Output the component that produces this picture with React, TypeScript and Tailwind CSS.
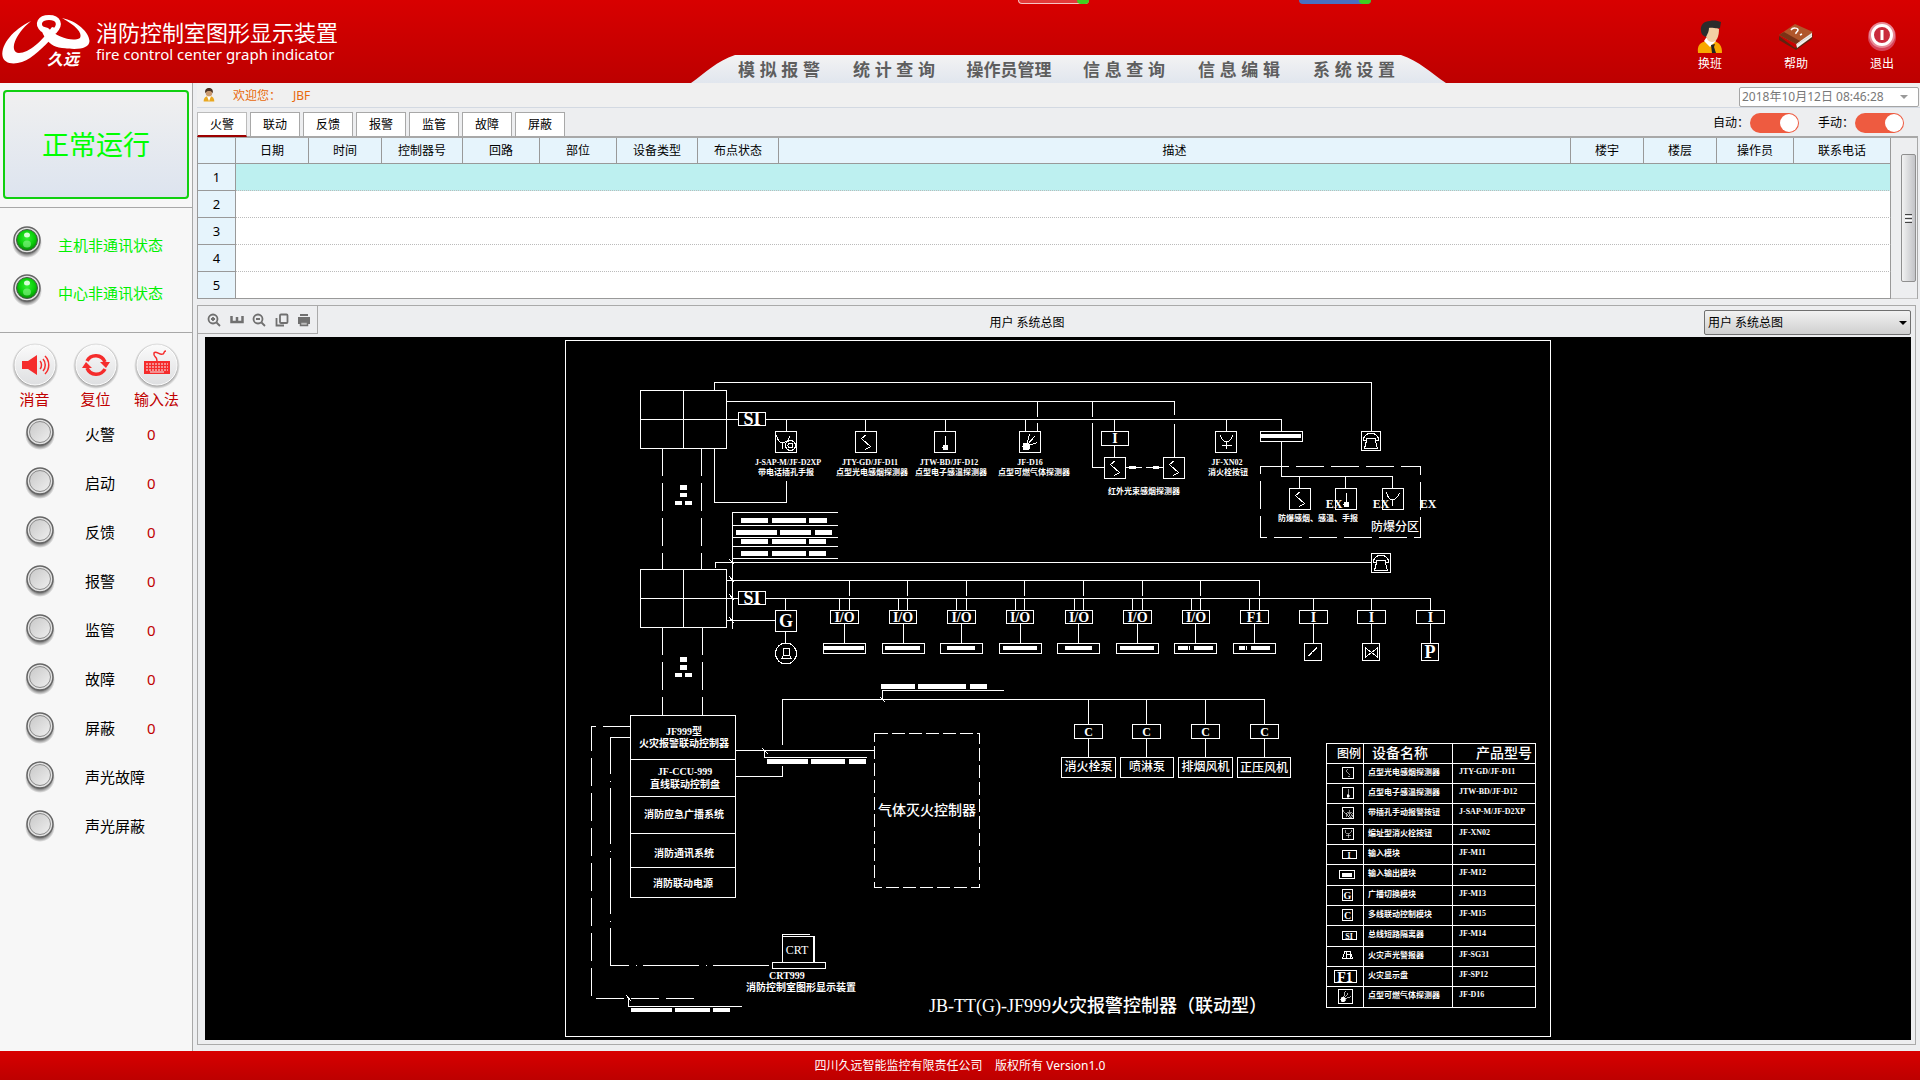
import { useState } from "react";
import type { ReactNode } from "react";

const menus = ["模 拟 报 警", "统 计 查 询", "操作员管理", "信 息 查 询", "信 息 编 辑", "系 统 设 置"];

const tabs = ["火警", "联动", "反馈", "报警", "监管", "故障", "屏蔽"];

const columns = [
  { name: "", width: "w-[38px]" },
  { name: "日期", width: "w-[73px]" },
  { name: "时间", width: "w-[73px]" },
  { name: "控制器号", width: "w-[81px]" },
  { name: "回路", width: "w-[77px]" },
  { name: "部位", width: "w-[77px]" },
  { name: "设备类型", width: "w-[81px]" },
  { name: "布点状态", width: "w-[81px]" },
  { name: "描述", width: "" },
  { name: "楼宇", width: "w-[73px]" },
  { name: "楼层", width: "w-[73px]" },
  { name: "操作员", width: "w-[77px]" },
  { name: "联系电话", width: "w-[97px]" },
];

const lamps = [
  { name: "火警", count: 0 },
  { name: "启动", count: 0 },
  { name: "反馈", count: 0 },
  { name: "报警", count: 0 },
  { name: "监管", count: 0 },
  { name: "故障", count: 0 },
  { name: "屏蔽", count: 0 },
  { name: "声光故障" },
  { name: "声光屏蔽" },
];

const legend = [
  { top: 763, icon: "smoke", name: "点型光电感烟探测器", model: "JTY-GD/JF-D11" },
  { top: 783, icon: "heat", name: "点型电子感温探测器", model: "JTW-BD/JF-D12" },
  { top: 803, icon: "manual", name: "带插孔手动报警按钮", model: "J-SAP-M/JF-D2XP" },
  { top: 824, icon: "hydrant", name: "编址型消火栓按钮", model: "JF-XN02" },
  { top: 844, icon: "I", name: "输入模块", model: "JF-M11" },
  { top: 864, icon: "io", name: "输入输出模块", model: "JF-M12" },
  { top: 885, icon: "G", name: "广播切换模块", model: "JF-M13" },
  { top: 905, icon: "C", name: "多线联动控制模块", model: "JF-M15" },
  { top: 925, icon: "SI", name: "总线短路隔离器", model: "JF-M14" },
  { top: 946, icon: "alarm", name: "火灾声光警报器", model: "JF-SG31" },
  { top: 966, icon: "F1", name: "火灾显示盘", model: "JF-SP12" },
  { top: 986, icon: "gas", name: "点型可燃气体探测器", model: "JF-D16" },
];

// x da caixa, x do ramal superior, x do ramal inferior, centro e barras da etiqueta
const modules = [
  { x: 830.5, w: 28, left: 839.5, right: 849.5, mid: 844.5, bars: [[824, 40]] },
  { x: 889.5, w: 27, left: 898.5, right: 907.5, mid: 903.5, bars: [[885, 35]] },
  { x: 947.5, w: 28, left: 956.5, right: 966.5, mid: 961.5, bars: [[947, 28]] },
  { x: 1006.5, w: 27, left: 1015.5, right: 1024.5, mid: 1020.5, bars: [[1003, 34]] },
  { x: 1065.5, w: 27, left: 1074.5, right: 1083.5, mid: 1078.5, bars: [[1065, 27]] },
  { x: 1123.5, w: 28, left: 1132.5, right: 1142.5, mid: 1137.5, bars: [[1120, 34]] },
  { x: 1182.5, w: 27, left: 1191.5, right: 1200.5, mid: 1195.5, bars: [[1178, 10], [1189, 1], [1194, 19]] },
  { x: 1240.5, w: 28, left: 1249.5, right: 1259.5, mid: 1254.5, bars: [[1239, 6], [1246, 1], [1251, 19]] },
];

const pumps = [
  { x: 1061.5, w: 54, c: 1088.5, name: "消火栓泵", y: 771 },
  { x: 1120.5, w: 53, c: 1146.5, name: "喷淋泵", y: 771 },
  { x: 1178.5, w: 54, c: 1205.5, name: "排烟风机", y: 771 },
  { x: 1237.5, w: 53, c: 1264.5, name: "正压风机", y: 772 },
];

function Logo() {
  return (
    <svg width="92" height="64" viewBox="0 12 92 64" fill="#fff" aria-hidden="true">
      <path d="M31 21C13 30 1 44 2.500 56C4 66 20 65 30 58C41 50 51 40 59 29L52 27C42 41 29 53 19 53C9 52 14 35 31 21Z" />
      <path d="M43 30C36 24 40 17.500 49 17.500S62 24 54 32" fill="none" stroke="#fff" strokeWidth="5" />
      <path d="M38 25C43 31 45 46 62 48C78 50 89 49 89.500 41C89 32 77 21 62 18C75 25 83 33 80 38C73 42 58 38 48 28Z" />
      <text x="47" y="65" className="text-[16px] font-bold italic">
        久远
      </text>
    </svg>
  );
}

function UserIcon() {
  return (
    <svg width="26" height="34" viewBox="0 0 26 34" aria-hidden="true">
      <path d="M1 33C0 25 3 23 9 21H17C23 23 25 26 25 33Z" fill="#f8a800" />
      <path d="M7 21L13 27L19 21L17 18H9Z" fill="#fff" />
      <path d="M14 25L18 24L17 27L19 33H15Z" fill="#222" />
      <path d="M8 10C8 16 10 22 15 22C20 22 22 16 22 9L14 5Z" fill="#f3cfa4" />
      <path d="M4 11C3 5 7 1 13 1C17 0 21 1 24 2L23 8C20 9 14 7 12 8C12 11 11 13 9 17C6 16 4 14 4 11Z" fill="#2c2c2c" />
    </svg>
  );
}

function BookIcon() {
  return (
    <svg width="36" height="28" viewBox="0 0 36 28" aria-hidden="true">
      <path d="M1 13L17 25L35 11L34 16L18 27L1 17Z" fill="#5d2410" />
      <path d="M18 20L34 9L34 14L19 25Z" fill="#f4f0ec" />
      <path d="M18 20L34 10M18 22L34 12" stroke="#bbb" strokeWidth="0.500" />
      <path d="M1 12L17 1L35 9L18 21Z" fill="#b0562b" />
      <path d="M1 12L6 9L22 18L18 21Z" fill="#7a3216" />
      <path d="M13 7C15 4 20 5 20 7C20 9 17 9 18 11M22 12L24 11" stroke="#fff" strokeWidth="1.500" fill="none" />
    </svg>
  );
}

function PowerIcon() {
  return (
    <svg width="30" height="32" viewBox="0 0 30 32" aria-hidden="true">
      <circle cx="15" cy="16" r="14" fill="#d8455a" />
      <circle cx="15" cy="14" r="13" fill="#e88a96" />
      <circle cx="15" cy="14" r="9.500" fill="#c92a3c" stroke="#fff" strokeWidth="3" />
      <path d="M15 9V19" stroke="#fff" strokeWidth="3" />
    </svg>
  );
}

function Lamp({ on = false }: { on?: boolean }) {
  return (
    <svg width="30" height="34" viewBox="0 0 30 34" className="shrink-0" aria-hidden="true">
      <defs>
        <radialGradient id="lampOn" cx="50%" cy="40%" r="60%">
          <stop offset="0" stopColor="#35f035" />
          <stop offset="0.600" stopColor="#0bcf0b" />
          <stop offset="1" stopColor="#068806" />
        </radialGradient>
        <linearGradient id="lampOff" x1="0" y1="0" x2="1" y2="1">
          <stop offset="0" stopColor="#c8c8c8" />
          <stop offset="1" stopColor="#efefef" />
        </linearGradient>
        <radialGradient id="lampShadow">
          <stop offset="0.700" stopColor="#000" stopOpacity="0.550" />
          <stop offset="1" stopColor="#000" stopOpacity="0" />
        </radialGradient>
      </defs>
      <ellipse cx="15" cy="18" rx="15" ry="15" fill="url(#lampShadow)" />
      <circle cx="15" cy="15" r="13" fill="#e4e4e4" stroke="#666" strokeWidth="1.500" />
      <circle cx="15" cy="15" r="10.500" fill={on ? "url(#lampOn)" : "url(#lampOff)"} stroke={on ? "#4a5a4a" : "#8a8a8a"} />
      {on && <ellipse cx="15" cy="10" rx="3" ry="2.500" fill="#d6ffd6" />}
      {on && <ellipse cx="15" cy="19" rx="4" ry="3.500" fill="#8df58d" opacity="0.600" />}
    </svg>
  );
}

function RoundIcon({ children }: { children: ReactNode }) {
  return (
    <svg width="48" height="48" viewBox="0 0 48 48" aria-hidden="true">
      <defs>
        <linearGradient id="knob" x1="0" y1="0" x2="0" y2="1">
          <stop offset="0" stopColor="#fafafa" />
          <stop offset="1" stopColor="#dedfe1" />
        </linearGradient>
        <radialGradient id="knobShadow">
          <stop offset="0.800" stopColor="#000" stopOpacity="0.450" />
          <stop offset="1" stopColor="#000" stopOpacity="0" />
        </radialGradient>
      </defs>
      <circle cx="24" cy="25" r="23" fill="url(#knobShadow)" />
      <circle cx="24" cy="24" r="20" fill="url(#knob)" stroke="#fff" />
      {children}
    </svg>
  );
}

function ToolIcon({ children }: { children: ReactNode }) {
  return (
    <svg width="14" height="14" viewBox="0 0 14 14" fill="none" stroke="#707070" strokeWidth="1.800" aria-hidden="true">
      {children}
    </svg>
  );
}

// símbolos desenhados dentro de uma caixa de 21px
function Symbol({ kind }: { kind: string }) {
  if (kind === "smoke") return <path d="M11 3L6 7L15 15L10 18" />;
  if (kind === "heat")
    return (
      <>
        <path d="M11 4V14" />
        <circle cx="11" cy="16" r="2.500" fill="#fff" />
      </>
    );
  if (kind === "gas")
    return (
      <>
        <circle cx="7" cy="15" r="3.500" fill="#fff" />
        <path d="M7 14L10 3M8 13L15 5M9 14L18 11" />
      </>
    );
  if (kind === "manual")
    return (
      <>
        <path d="M1 4C2 9 4 11 7 11S13 9 14 5M7 11V17" />
        <circle cx="15" cy="14" r="5" />
        <circle cx="15" cy="14" r="2.500" />
      </>
    );
  if (kind === "hydrant") return <path d="M5 4C6 8 8 10 11 10S16 8 17 4M11 10V17M6 14H16" />;
  return <path d="M4 4C5 9 7 11 10 11S15 9 17 5M10 11V17" />;
}

function Device({ x, y, kind, size = 21 }: { x: number; y: number; kind: string; size?: number }) {
  return (
    <svg x={x - 0.5} y={y - 0.5} width={size + 1} height={size + 1} viewBox="-0.5 -0.5 22 22">
      <rect width="21" height="21" strokeWidth={21 / size} />
      <Symbol kind={kind} />
    </svg>
  );
}

function Phone({ x, y }: { x: number; y: number }) {
  return (
    <g transform={`translate(${x} ${y})`}>
      <rect width="19" height="19" />
      <path d="M2 9C2 4 5 2 9.500 2S17 4 17 9H14V7H5V9ZM5 9L3 17H16L14 9" />
    </g>
  );
}

function Label({ x, y, children, size = "text-[8px]" }: { x: number; y: number; children: ReactNode; size?: string }) {
  return (
    <text x={x} y={y} textAnchor="middle" fill="#fff" stroke="none" className={size}>
      {children}
    </text>
  );
}

function Bars({ y, h, items }: { y: number; h: number; items: number[][] }) {
  return (
    <g fill="#fff" stroke="none">
      {items.map(([x, w]) => (
        <rect key={x} x={x} y={y} width={w} height={h} />
      ))}
    </g>
  );
}

function LegendIcon({ top, icon }: { top: number; icon: string }) {
  const y = top + 4.5;
  if (icon === "I" || icon === "SI" || icon === "F1") {
    const wide = icon === "F1";
    return (
      <>
        <rect x={wide ? 1334.5 : 1342.5} y={wide ? y : y + 2} width={wide ? 22 : 14} height={wide ? 12 : 8} />
        <Label x={wide ? 1345 : 1349} y={wide ? y + 11 : y + 9} size={wide ? "text-[14px]" : "text-[8px]"}>
          {icon}
        </Label>
      </>
    );
  }
  if (icon === "io")
    return (
      <>
        <rect x="1339.500" y={y + 2} width="15" height="8" />
        <Bars y={y + 4} h={4} items={[[1342, 10]]} />
      </>
    );
  if (icon === "G" || icon === "C")
    return (
      <>
        <rect x="1342.500" y={y} width="10" height="11" />
        <Label x={1347.5} y={y + 9} size="text-[10px]">
          {icon}
        </Label>
      </>
    );
  if (icon === "alarm")
    return <path d={`M1342.500 ${y + 8}L1345 ${y + 1}H1350L1352.500 ${y + 8}ZM1346 ${y + 1}V${y + 8}M1346 ${y + 4}H1350V${y + 8}`} />;
  return <Device x={icon === "gas" ? 1338.5 : 1342.5} y={icon === "gas" ? y - 1 : y} kind={icon} size={icon === "gas" ? 14 : 11} />;
}

function Diagram() {
  return (
    <svg
      width="987"
      height="698"
      viewBox="565 340 987 698"
      fill="none"
      stroke="#fff"
      shapeRendering="crispEdges"
      className="shrink-0 font-['Liberation_Serif','Noto_Sans_CJK_SC',serif] font-bold"
      role="img"
      aria-label="系统总图"
    >
      <rect x="565.500" y="340.500" width="985" height="696" />

      {/* 楼层一 */}
      <rect x="640.500" y="390.500" width="86" height="58" />
      <path d="M683.500 390V448M640 419.500H738M765 419.500H1281.500V431" />
      <path d="M714.500 390V382.500H1371.500V431M726 401.500H1174.500V415M1174.500 424V457" />
      <path d="M714.500 448V502.500H786.500V481" />
      <rect x="738.500" y="412.500" width="27" height="13" />
      <Label x={752} y={425} size="text-[18px]">SI</Label>
      <path d="M786.500 419V431M865.500 419V431M945.500 419V431M1025.500 419V431M1037.500 401V417M1037.500 423V431M1114.500 419V431M1226.500 419V431" />
      <Device x={775.5} y={431.5} kind="manual" />
      <Device x={855.5} y={431.5} kind="smoke" />
      <Device x={934.5} y={431.5} kind="heat" />
      <Device x={1019.5} y={431.5} kind="gas" />
      <Device x={1215.5} y={431.5} kind="hydrant" />
      <Label x={788} y={465}>J-SAP-M/JF-D2XP</Label>
      <Label x={786} y={475}>带电话插孔手报</Label>
      <Label x={870} y={465}>JTY-GD/JF-D11</Label>
      <Label x={872} y={475}>点型光电感烟探测器</Label>
      <Label x={949} y={465}>JTW-BD/JF-D12</Label>
      <Label x={951} y={475}>点型电子感温探测器</Label>
      <Label x={1030} y={465}>JF-D16</Label>
      <Label x={1034} y={475}>点型可燃气体探测器</Label>
      <Label x={1227} y={465}>JF-XN02</Label>
      <Label x={1228} y={475}>消火栓按钮</Label>
      <Label x={1144} y={494}>红外光束感烟探测器</Label>

      <path d="M1092.500 401V417M1092.500 423V467.500H1104M1114.500 445V457M1125 467.500H1142M1146 467.500H1163" />
      <Bars y={466} h={3} items={[[1129, 7], [1153, 6]]} />
      <rect x="1101.500" y="431.500" width="27" height="14" />
      <Label x={1115} y={443} size="text-[14px]">I</Label>
      <Device x={1104.5} y={457.5} kind="smoke" />
      <Device x={1163.5} y={457.5} kind="smoke" />

      <rect x="1260.500" y="431.500" width="42" height="10" />
      <Bars y={434} h={4} items={[[1261, 40]]} />
      <path d="M1281.500 441V476.500H1392.500V488M1299.500 476V488M1345.500 476V488" />
      <rect x="1260.500" y="466.500" width="160" height="71" strokeDasharray="28 7" />
      <Device x={1289.5} y={488.5} kind="smoke" />
      <Device x={1335.5} y={488.5} kind="heat" />
      <Device x={1382.5} y={488.5} kind="button" />
      <Label x={1334} y={508} size="text-[12px]">EX</Label>
      <Label x={1381} y={508} size="text-[12px]">EX</Label>
      <Label x={1428} y={508} size="text-[12px]">EX</Label>
      <Label x={1318} y={521}>防爆感烟、感温、手报</Label>
      <Label x={1395} y={531} size="text-[12px] font-medium">防爆分区</Label>
      <Phone x={1361.5} y={431.5} />

      <path d="M662.500 448V569M701.500 448V569M662.500 627V715M702.500 627V715" strokeDasharray="28 7" />
      <Bars y={485} h={5} items={[[680, 7]]} />
      <Bars y={493} h={4} items={[[680, 7]]} />
      <Bars y={501} h={4} items={[[675, 7], [685, 7]]} />
      <Bars y={657} h={5} items={[[680, 7]]} />
      <Bars y={665} h={5} items={[[680, 7]]} />
      <Bars y={673} h={4} items={[[675, 7], [685, 7]]} />

      <path d="M838 512.500H732.500V629M732 525.500H838M732 537.500H838M732 546.500H838M732 558.500H838" />
      <Bars y={518} h={5} items={[[741, 27], [772, 34], [809, 18]]} />
      <Bars y={530} h={5} items={[[736, 41], [780, 31], [815, 17]]} />
      <Bars y={539} h={5} items={[[741, 27], [772, 34], [809, 17]]} />
      <Bars y={551} h={5} items={[[741, 27], [772, 34], [809, 17]]} />

      {/* 楼层二 */}
      <rect x="640.500" y="569.500" width="86" height="58" />
      <path d="M683.500 569V627M640 598.500H738M765 598.500H1430.500V610M726 580.500H1260M726 620.500H775" />
      <path d="M715.500 568V562.500H1371" />
      <path d="M729 559L734 564M729 576L734 582M729 594L734 600M729 617L734 623" />
      <rect x="738.500" y="591.500" width="27" height="13" />
      <Label x={752} y={604} size="text-[18px]">SI</Label>
      <Phone x={1371.5} y={553.5} />
      <path d="M785.500 598V610M785.500 631V643" />
      <rect x="775.500" y="610.500" width="21" height="21" />
      <Label x={786} y={627} size="text-[18px]">G</Label>
      <circle cx="786" cy="653.500" r="10.500" />
      <path d="M783.500 648.500H789.500V655.500H783.500ZM783.500 655.500L781.500 658.500H791.500L789.500 655.500" />
      {modules.map((m, i) => (
        <g key={m.x}>
          <path d={`M${m.right} 580V596M${m.right} 599V610M${m.left} 598V610M${m.mid} 623V643`} />
          <rect x={m.x} y="610.500" width={m.w} height="13" />
          <Label x={m.x + m.w / 2} y={622} size="text-[14px]">
            {i === 7 ? "F1" : "I/O"}
          </Label>
          <rect x={m.mid - 21} y="643.500" width="42" height="10" />
          <Bars y={646} h={4} items={m.bars} />
        </g>
      ))}
      {[1313.5, 1371.5, 1430.5].map((x) => (
        <g key={x}>
          <path d={`M${x} 598V610M${x} 623V643`} />
          <rect x={x - 14} y="610.500" width="28" height="13" />
          <Label x={x} y={622} size="text-[14px]">I</Label>
          <rect x={x - 9} y="643.500" width="17" height="17" />
        </g>
      ))}
      <path d="M1308.500 656L1317 647M1313 652L1317 648" />
      <path d="M1365.500 648V657L1377.500 648V657Z" />
      <Label x={1430} y={658} size="text-[18px]">P</Label>

      {/* 控制器 */}
      <rect x="630.500" y="715.500" width="105" height="182" />
      <path d="M630 759.500H735M630 796.500H735M630 833.500H735M630 867.500H735" />
      <Label x={684} y={735} size="text-[10px]">JF999型</Label>
      <Label x={684} y={747} size="text-[10px]">火灾报警联动控制器</Label>
      <Label x={685} y={775} size="text-[10px]">JF-CCU-999</Label>
      <Label x={685} y={788} size="text-[10px]">直线联动控制盘</Label>
      <Label x={684} y={818} size="text-[10px]">消防应急广播系统</Label>
      <Label x={684} y={857} size="text-[10px]">消防通讯系统</Label>
      <Label x={683} y={887} size="text-[10px]">消防联动电源</Label>
      <path d="M630.500 726.500H591.500V998.500H699" strokeDasharray="28 7" />
      <path d="M630.500 737.500H610.500V965.500H772" strokeDasharray="56 7 1 6" />
      <path d="M626 995L631 1001M628.500 998V1006.500H742" />
      <Bars y={1008} h={4} items={[[631, 41], [675, 35], [713, 17]]} />

      <path d="M814.500 962V936.500H782.500V962M782.500 936V934.500H810M813.500 936V962" />
      <rect x="772.500" y="962.500" width="53" height="6" />
      <Label x={797} y={954} size="text-[12px] font-medium">CRT</Label>
      <Label x={787} y={979} size="text-[10px]">CRT999</Label>
      <Label x={801} y={991} size="text-[10px]">消防控制室图形显示装置</Label>

      <path d="M735 750.500H874M764.500 750V757.500H867M762 748L768 754" />
      <Bars y={759} h={5} items={[[767, 41], [811, 34], [849, 17]]} />
      <path d="M735 776.500H782.500V766M782.500 745V699.500H1264.500M882.500 699V690.500H1004M880 697L885 702" />
      <Bars y={684} h={5} items={[[881, 34], [918, 48], [970, 17]]} />
      <rect x="874.500" y="733.500" width="105" height="154" strokeDasharray="13 4" />
      <Label x={927} y={815} size="text-[14px] font-medium">气体灭火控制器</Label>

      {pumps.map((p) => (
        <g key={p.name}>
          <path d={`M${p.c} 699V724M${p.c} 738V757`} />
          <rect x={p.c - 14} y="724.500" width="28" height="14" />
          <Label x={p.c} y={736} size="text-[12px]">C</Label>
          <rect x={p.x} y="757.500" width={p.w} height="20" />
          <Label x={p.x + p.w / 2} y={p.y} size="text-[12px] font-medium">{p.name}</Label>
        </g>
      ))}

      <Label x={1098} y={1012} size="text-[18px] font-medium">JB-TT(G)-JF999火灾报警控制器（联动型）</Label>

      {/* 图例 */}
      <rect x="1326.500" y="743.500" width="209" height="264" />
      <path d="M1363.500 743V1007M1452.500 743V1007" />
      <Label x={1349} y={758} size="text-[12px] font-medium">图例</Label>
      <Label x={1400} y={758} size="text-[14px] font-medium">设备名称</Label>
      <Label x={1504} y={758} size="text-[14px] font-medium">产品型号</Label>
      {legend.map((item) => (
        <g key={item.name}>
          <path d={`M1326 ${item.top + 0.5}H1535`} />
          <LegendIcon top={item.top} icon={item.icon} />
          <text x="1368" y={item.top + 12} fill="#fff" stroke="none" className="text-[8px]">
            {item.name}
          </text>
          <text x="1459" y={item.top + 11} fill="#fff" stroke="none" className="text-[8px]">
            {item.model}
          </text>
        </g>
      ))}
    </svg>
  );
}

function Switch({ label, checked, onChange }: { label: string; checked: boolean; onChange: () => void }) {
  return (
    <label className="flex items-center gap-px">
      {label}
      <input
        type="checkbox"
        checked={checked}
        onChange={onChange}
        className="h-5 w-[49px] appearance-none rounded-full bg-gray-400 p-px before:block before:size-[18px] before:rounded-full before:bg-white checked:bg-[#ee5b40] checked:before:ml-auto"
      />
    </label>
  );
}

export default function App() {
  const [tab, setTab] = useState("火警");
  const [auto, setAuto] = useState(true);
  const [manual, setManual] = useState(true);
  const [row, setRow] = useState(1);

  return (
    <div className="flex min-h-screen flex-col bg-[#edeef0] font-['Noto_Sans','Noto_Sans_CJK_SC',sans-serif] text-[12px] text-black">
      <header className="relative flex h-[83px] bg-linear-to-b from-[#d80000] to-[#bd0000] text-white">
        <div className="flex flex-1 items-start gap-1 pt-3">
          <Logo />
          <div className="pt-[6px]">
            <h1 className="text-[22px] leading-7 whitespace-nowrap">消防控制室图形显示装置</h1>
            <p className="text-[15px] leading-4 whitespace-nowrap">fire control center graph indicator</p>
          </div>
        </div>

        {/* abas ocultas no topo da janela */}
        <div className="absolute top-0 left-[1018px] flex h-1 w-[71px] justify-end rounded-b-sm border-b border-l border-white/70 bg-[#e23a3a]">
          <span className="h-1 w-3 rounded-b-full bg-[#3fd020]" />
        </div>
        <div className="absolute top-0 left-[1299px] flex h-1 w-[72px] justify-end rounded-b-sm bg-[#4a6fc0]">
          <span className="h-1 w-3 rounded-b-full bg-[#3fd020]" />
        </div>

        <nav className="relative h-7 w-[755px] self-end">
          <svg className="absolute inset-0" width="755" height="28" viewBox="0 0 755 28" preserveAspectRatio="none" aria-hidden="true">
            <defs>
              <linearGradient id="menuBg" x1="0" y1="0" x2="0" y2="1">
                <stop offset="0" stopColor="#f3f3f3" />
                <stop offset="1" stopColor="#e1e6ee" />
              </linearGradient>
            </defs>
            <path d="M0 28C14 18 26 6 44 0H710C728 6 740 18 755 28Z" fill="url(#menuBg)" />
          </svg>
          <ul className="relative flex h-full items-center justify-center pt-[3px] pr-1">
            {menus.map((menu) => (
              <li key={menu} className="w-[115px] text-center">
                <button
                  type="button"
                  className="font-['Liberation_Sans','Noto_Sans_CJK_SC',sans-serif] text-[17px] leading-6 font-bold whitespace-nowrap text-[#5e5e5e]"
                >
                  {menu}
                </button>
              </li>
            ))}
          </ul>
        </nav>

        <div className="flex w-[474px] justify-end gap-[38px] pt-5 pr-[14px] leading-4">
          <button type="button" className="flex w-12 flex-col items-center gap-[2px]">
            <span className="flex h-[34px] items-center"><UserIcon /></span>
            换班
          </button>
          <button type="button" className="flex w-12 flex-col items-center gap-[2px]">
            <span className="flex h-[34px] items-center"><BookIcon /></span>
            帮助
          </button>
          <button type="button" className="flex w-12 flex-col items-center gap-[2px]">
            <span className="flex h-[34px] items-center"><PowerIcon /></span>
            退出
          </button>
        </div>
      </header>

      <div className="flex flex-1">
        <aside className="w-[193px] border-r border-[#a8a8a8] bg-[#f7f7f7]">
          <div className="mx-[3px] mt-[7px] mb-2 flex h-[109px] items-center justify-center rounded border-2 border-[#10d010] bg-linear-to-b from-[#f0f0f0] to-[#dde4ef] pt-[2px] text-[27px] text-[#00ff00]">
            正常运行
          </div>
          <div className="h-[126px] border-y border-[#a8a8a8] pt-[10px] text-[15px] text-[#00f000]">
            {["主机非通讯状态", "中心非通讯状态"].map((text) => (
              <div key={text} className="flex h-12 items-center gap-4 pl-3">
                <Lamp on />
                <span className="pt-[6px]">{text}</span>
              </div>
            ))}
          </div>
          <div className="flex px-1 pt-2 text-[15px] leading-5 text-[#c00000]">
            <button type="button" className="flex w-[61px] flex-col items-center">
              <RoundIcon>
                <path d="M11 20H17L26 14V34L17 28H11Z" fill="#f52c2c" />
                <path d="M29 20C31 22 31 26 29 28M32 18C35 21 35 27 32 30M34 15C39 20 39 28 34 33" fill="none" stroke="#f52c2c" strokeWidth="1.500" />
              </RoundIcon>
              消音
            </button>
            <button type="button" className="flex w-[61px] flex-col items-center">
              <RoundIcon>
                <path d="M15 20A10 10 0 0 1 33 21M33 28A10 10 0 0 1 15 27" fill="none" stroke="#f52c2c" strokeWidth="3.500" />
                <path d="M28 21H38L34 27ZM10 27L14 21L20 27Z" fill="#f52c2c" />
              </RoundIcon>
              复位
            </button>
            <button type="button" className="flex w-[61px] flex-col items-center">
              <RoundIcon>
                <path d="M11 20H37V33H11Z" fill="#f52c2c" />
                <path d="M13 23H35M13 26H35M13 29H35" stroke="#f3f3f3" strokeDasharray="2 1" />
                <path d="M17 31H31" stroke="#f3f3f3" />
                <path d="M24 20C24 14 20 17 21 12C23 9 27 15 30 13C32 12 30 10 33 10" fill="none" stroke="#f52c2c" strokeWidth="1.500" />
              </RoundIcon>
              输入法
            </button>
          </div>
          <ul className="text-[15px]">
            {lamps.map((lamp) => (
              <li key={lamp.name} className="flex h-[49px] items-center pl-[25px]">
                <Lamp />
                <span className="ml-[30px] w-[62px] pt-[2px] whitespace-nowrap">{lamp.name}</span>
                <span className="pt-[2px] text-[#c00000]">{lamp.count}</span>
              </li>
            ))}
          </ul>
        </aside>

        <main className="flex min-w-0 flex-1 flex-col pl-1">
          <div className="flex h-[25px] items-center border-b border-[#d3d9e2] bg-[#f0f0f0] pl-[6px] text-[#e8690b]">
            <svg width="12" height="14" viewBox="0 0 26 34" className="mr-[18px]" aria-hidden="true">
              <path d="M0 33C0 24 4 21 9 20H17C22 21 26 25 26 33Z" fill="#e9a820" />
              <path d="M8 20L13 32L18 20Z" fill="#fff" />
              <circle cx="13" cy="12" r="8" fill="#c99a70" />
              <path d="M4 13C2 4 7 0 13 0S24 4 22 13C20 8 17 7 13 7S6 8 4 13Z" fill="#4a3020" />
            </svg>
            <span className="w-[60px] pt-[2px]">欢迎您：</span>
            <span className="flex-1 pt-[2px]">JBF</span>
            <div className="mr-px flex h-5 w-[180px] items-center self-end rounded-xs border border-[#a5a5a5] bg-white">
              <input
                type="text"
                readOnly
                aria-label="日期时间"
                value="2018年10月12日 08:46:28"
                className="w-40 pl-[2px] text-[#777] outline-none"
              />
              <svg width="8" height="4" viewBox="0 0 8 4" aria-hidden="true">
                <path d="M0 0H8L4 4Z" fill="#999" />
              </svg>
            </div>
          </div>

          <div className="flex h-[28px] items-end">
            <div role="tablist" className="flex gap-[3px]">
              {tabs.map((name) => (
                <button
                  key={name}
                  type="button"
                  role="tab"
                  aria-selected={tab === name}
                  onClick={() => setTab(name)}
                  className={
                    tab === name
                      ? "relative z-10 -mb-px h-[25px] w-[50px] border border-b-2 border-[#bbb] border-b-[#9c0000] bg-white pt-px"
                      : "h-6 w-[50px] border border-b-0 border-[#a8a8a8] bg-white"
                  }
                >
                  {name}
                </button>
              ))}
            </div>
            <div className="ml-auto flex gap-[19px] self-center pt-[2px] pr-4">
              <Switch label="自动：" checked={auto} onChange={() => setAuto(!auto)} />
              <Switch label="手动：" checked={manual} onChange={() => setManual(!manual)} />
            </div>
          </div>

          <div className="mr-[2px] flex border-t-2 border-r border-[#a8a8a8]">
            <table className="flex-1 table-fixed border-separate border-spacing-0 border-l border-[#999] bg-white text-center">
              <thead>
                <tr className="h-[26px] bg-[#e6f4fc]">
                  {columns.map((col) => (
                    <th key={col.name} className={`border-r border-b border-[#999] p-0 font-normal ${col.width}`}>
                      {col.name}
                    </th>
                  ))}
                </tr>
              </thead>
              <tbody>
                {[1, 2, 3, 4, 5].map((n) => (
                  <tr key={n} className="h-[27px]" onClick={() => setRow(n)}>
                    <th className="border-r border-b border-[#999] bg-[#e6f4fc] p-0 pt-px text-[13px] font-normal">{n}</th>
                    <td
                      colSpan={12}
                      className={`border-r border-b border-[#999] p-0 ${n < 5 ? "border-b-[#bbb] [border-bottom-style:dotted]" : ""} ${row === n ? "bg-[#bdf0f0]" : ""}`}
                    />
                  </tr>
                ))}
              </tbody>
            </table>
            <div className="w-[26px] border-b border-[#c4c4c4] pt-4 pl-[10px]">
              <div className="flex h-32 w-[15px] flex-col items-center justify-center gap-px rounded-xs border border-[#8f8f8f] bg-linear-to-r from-[#f2f2f2] to-[#c2c3c7]">
                <span className="h-px w-[7px] bg-[#444]" />
                <span className="h-px w-[7px] bg-[#fff]" />
                <span className="h-px w-[7px] bg-[#444]" />
                <span className="h-px w-[7px] bg-[#fff]" />
                <span className="h-px w-[7px] bg-[#444]" />
              </div>
            </div>
          </div>

          <section className="mt-[6px] mr-1 mb-[6px] flex flex-1 flex-col border border-[#aaa] pr-1 pb-1 pl-[7px]">
            <div className="-ml-[7px] flex h-[31px] items-start">
              <div className="flex h-[28px] w-[120px] items-center justify-between border-r border-b border-[#aaa] pr-[6px] pl-[9px]">
                <button type="button" aria-label="放大">
                  <ToolIcon>
                    <circle cx="6" cy="6" r="4.500" />
                    <path d="M9.500 9.500L13 13M4 6H8M6 4V8" />
                  </ToolIcon>
                </button>
                <button type="button" aria-label="原始大小">
                  <ToolIcon>
                    <path d="M1.500 3V9H12.500V3M7 4V9" strokeWidth="2.500" />
                  </ToolIcon>
                </button>
                <button type="button" aria-label="缩小">
                  <ToolIcon>
                    <circle cx="6" cy="6" r="4.500" />
                    <path d="M9.500 9.500L13 13M4 6H8" />
                  </ToolIcon>
                </button>
                <button type="button" aria-label="复制">
                  <ToolIcon>
                    <rect x="5" y="1.500" width="7.500" height="8.500" rx="1" />
                    <path d="M1.500 5V12.500H9" />
                  </ToolIcon>
                </button>
                <button type="button" aria-label="打印">
                  <ToolIcon>
                    <path d="M1 4H13V11H1ZM3 1H11V3H3Z" fill="#707070" stroke="none" />
                    <path d="M3.500 9V12.500H10.500V9Z" fill="#bbb" strokeWidth="1.500" />
                  </ToolIcon>
                </button>
              </div>
              <h2 className="flex-1 pl-8 text-center leading-[34px]">用户 系统总图</h2>
              <div className="relative mt-1">
                <select
                  aria-label="选择图纸"
                  className="h-[25px] w-[207px] appearance-none rounded-xs border border-[#707070] bg-linear-to-b from-[#f2f2f2] to-[#cfcfcf] pl-[3px]"
                >
                  <option>用户 系统总图</option>
                </select>
                <svg width="8" height="4" viewBox="0 0 8 4" className="pointer-events-none absolute top-[11px] right-1" aria-hidden="true">
                  <path d="M0 0H8L4 4Z" />
                </svg>
              </div>
            </div>
            <div className="flex flex-1 justify-center bg-black pt-[3px]">
              <Diagram />
            </div>
          </section>
        </main>
      </div>

      <footer className="flex h-[29px] items-center justify-center bg-linear-to-b from-[#d80000] to-[#bd0000] whitespace-pre text-white">
        {"四川久远智能监控有限责任公司    版权所有 Version1.0"}
      </footer>
    </div>
  );
}
